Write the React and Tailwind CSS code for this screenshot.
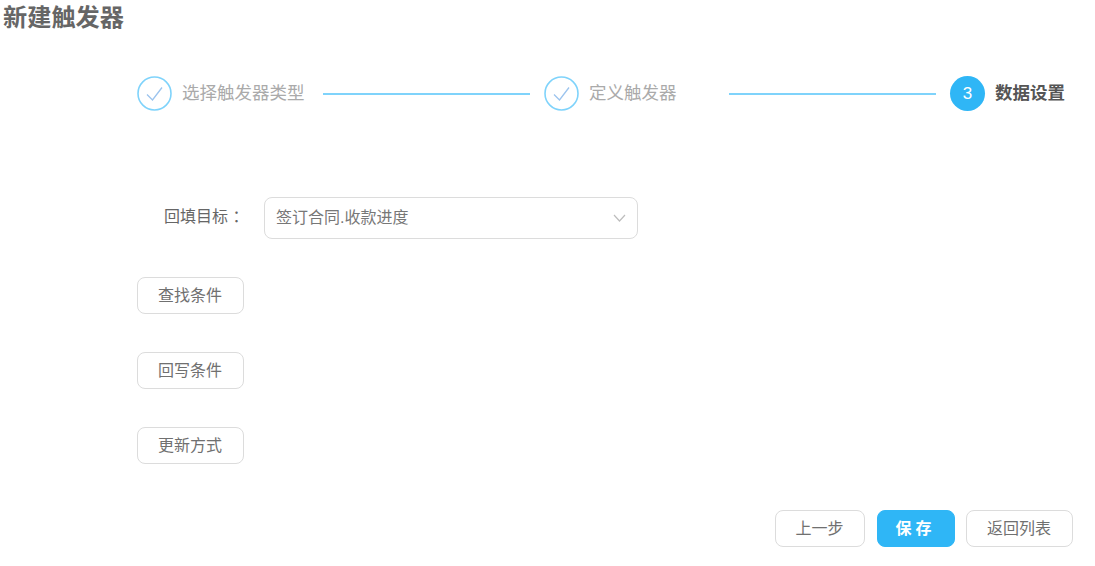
const font = { fontFamily: '"Liberation Sans", "Noto Sans CJK SC", sans-serif' };

function Check() {
  return (
    <svg width="35" height="35" viewBox="0 0 35 35" fill="none" className="shrink-0">
      <circle cx="17.5" cy="17.5" r="16.5" stroke="#7fd3fb" strokeWidth="1.6" />
      <path d="M10 18.5 L15.5 24 L25 11.5" stroke="#9cc4ee" strokeWidth="1.3" />
    </svg>
  );
}

function Btn({ children, className = "" }) {
  return (
    <div className={`flex h-[37px] items-center justify-center rounded-lg border border-[#dcdcdc] bg-white pr-[1px] text-[16px] text-[#707070] ${className}`}>
      {children}
    </div>
  );
}

export default function App() {
  return (
    <div style={font} className="flex h-[566px] w-[1095px] flex-col overflow-hidden bg-white">
      <h1 className="ml-[3px] mt-[4px] h-[28px] text-[24.2px] font-bold leading-[28px] text-[#666666]">新建触发器</h1>

      <div className="ml-[137px] mt-[44px] flex h-[35px] items-center">
        <Check />
        <span className="ml-[10px] w-[122px] whitespace-nowrap text-[17.5px] text-[#aaaaaa]">选择触发器类型</span>
        <div className="ml-[19px] h-[2px] w-[207px] bg-[#7fd3fb]" />
        <div className="ml-[14px]"><Check /></div>
        <span className="ml-[10px] w-[87px] whitespace-nowrap text-[17.5px] text-[#aaaaaa]">定义触发器</span>
        <div className="ml-[53px] h-[2px] w-[207px] bg-[#7fd3fb]" />
        <div className="ml-[14px] flex h-[35px] w-[35px] items-center justify-center rounded-full bg-[#2fb6f6] text-[17px] text-white">3</div>
        <span className="ml-[10px] whitespace-nowrap text-[17.5px] font-bold text-[#555555]">数据设置</span>
      </div>

      <div className="ml-[164px] mt-[86px] flex h-[42px] items-center">
        <span className="w-[100px] whitespace-nowrap pb-[2px] text-[16px] text-[#666666]">回填目标 ：</span>
        <div className="flex h-[42px] w-[374px] items-center justify-between rounded-lg border border-[#dcdcdc] pl-[11px] pr-[11px]">
          <span className="text-[16px] text-[#777777]">签订合同.收款进度</span>
          <svg width="13" height="8" viewBox="0 0 13 8" fill="none">
            <path d="M1 1 L6.5 7 L12 1" stroke="#bdbdbd" strokeWidth="1.2" />
          </svg>
        </div>
      </div>

      <div className="ml-[137px] mt-[38px] flex w-[107px] flex-col gap-[38px]">
        <Btn>查找条件</Btn>
        <Btn>回写条件</Btn>
        <Btn>更新方式</Btn>
      </div>

      <div className="ml-[775px] mt-[46px] flex">
        <Btn className="w-[90px]">上一步</Btn>
        <Btn className="ml-[12px] w-[78px] !border-[#2fb6f6] !bg-[#2fb6f6] font-bold tracking-[4px] !text-white">保存</Btn>
        <Btn className="ml-[11px] w-[107px]">返回列表</Btn>
      </div>
    </div>
  );
}
